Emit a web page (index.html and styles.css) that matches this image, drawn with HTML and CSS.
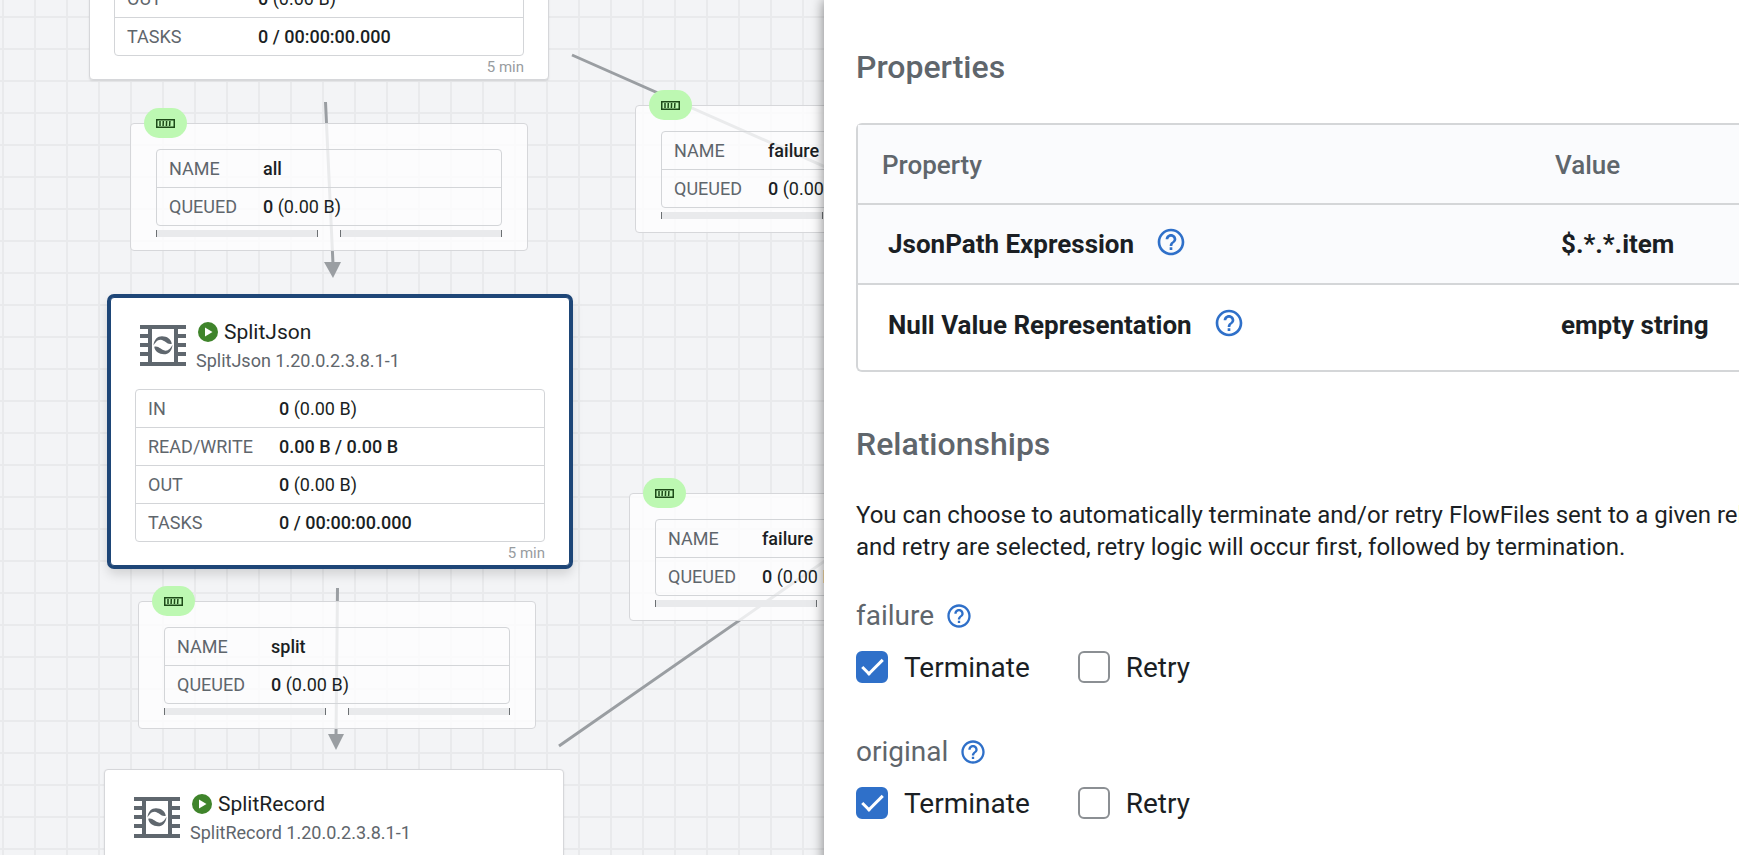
FILE: index.html
```html
<!DOCTYPE html>
<html lang="en">
<head>
<meta charset="utf-8">
<title>Flow Designer</title>
<link rel="stylesheet" href="styles.css">
</head>
<body>
<svg class="symbols" aria-hidden="true">
  <symbol id="help" viewBox="0 0 24 24"><path fill="currentColor" d="M11 18h2v-2h-2v2zm1-16C6.48 2 2 6.48 2 12s4.48 10 10 10 10-4.48 10-10S17.52 2 12 2zm0 18c-4.41 0-8-3.59-8-8s3.59-8 8-8 8 3.59 8 8-3.59 8-8 8zm0-14c-2.21 0-4 1.79-4 4h2c0-1.1.9-2 2-2s2 .9 2 2c0 2-3 1.75-3 5h2c0-2.250 3-2.500 3-5 0-2.210-1.790-4-4-4z"/></symbol>
  <symbol id="processor" viewBox="0 0 46 41">
    <path fill="currentColor" fill-rule="evenodd" d="M0 0H46V4H38V9H46V13H38V18H46V22H38V27H46V31H38V37H46V41H0V37H8V31H0V27H8V22H0V18H8V13H0V9H8V4H0ZM12 4V37H34V4Z"/>
    <path fill="currentColor" d="M13.500 20.500C14 14.500 17.500 11.300 22 11.300C27 11.300 31 14 31.800 18.800C27 20 25.500 15.500 20.500 14.800C17 15 15.500 17.500 13.500 20.500ZM32.500 20C32 26 28.500 29.300 24 29.300C19 29.300 15 26.500 14.200 21.800C19 20.600 20.500 25 25.500 25.800C29 25.500 30.500 23 32.500 20Z"/>
  </symbol>
  <symbol id="running" viewBox="0 0 20 20"><circle cx="10" cy="10" r="10" fill="#3f842b"/><path fill="#fff" d="M7 5.500L14.500 10L7 14.500Z"/></symbol>
  <symbol id="balance" viewBox="0 0 19 9"><path fill="none" stroke="#1d4a18" stroke-width="1.500" d="M.75.75H18.250V8.250H.75Z"/><path fill="none" stroke="#1d4a18" stroke-width="1.500" d="M4 2V7M7.300 2L7.100 7M10.600 2L10.400 7M13.900 2L13.600 7"/></symbol>
</svg>
<main class="designer">
  <section class="canvas" aria-label="Flow canvas">
    <svg class="links" aria-hidden="true">
      <path d="M325.500 102L333 264M337.500 588L336 736M572 55L1000 244M559 746L1000 439"/>
      <path class="arrow" d="M324 262H341L333 278ZM328 734H344L336 750Z"/>
    </svg>

    <article class="node node-source">
      <table class="stats">
        <tr><th scope="row">OUT</th><td><b>0</b> (0.00 B)</td></tr>
        <tr><th scope="row">TASKS</th><td><b>0 / 00:00:00.000</b></td></tr>
      </table>
      <p class="window">5 min</p>
    </article>

    <article class="node node-json selected">
      <header class="node-head">
        <svg class="type-icon"><use href="#processor"/></svg>
        <div>
          <h2><svg class="state"><use href="#running"/></svg>SplitJson</h2>
          <p class="version">SplitJson 1.20.0.2.3.8.1-1</p>
        </div>
      </header>
      <table class="stats">
        <tr><th scope="row">IN</th><td><b>0</b> (0.00 B)</td></tr>
        <tr><th scope="row">READ/WRITE</th><td><b>0.00 B / 0.00 B</b></td></tr>
        <tr><th scope="row">OUT</th><td><b>0</b> (0.00 B)</td></tr>
        <tr><th scope="row">TASKS</th><td><b>0 / 00:00:00.000</b></td></tr>
      </table>
      <p class="window">5 min</p>
    </article>

    <article class="node node-record">
      <header class="node-head">
        <svg class="type-icon"><use href="#processor"/></svg>
        <div>
          <h2><svg class="state"><use href="#running"/></svg>SplitRecord</h2>
          <p class="version">SplitRecord 1.20.0.2.3.8.1-1</p>
        </div>
      </header>
    </article>

    <article class="queue queue-all">
      <span class="badge"><svg><use href="#balance"/></svg></span>
      <table class="stats">
        <tr><th scope="row">NAME</th><td><b>all</b></td></tr>
        <tr><th scope="row">QUEUED</th><td><b>0</b> (0.00 B)</td></tr>
      </table>
      <div class="meters"><i></i><i></i></div>
    </article>

    <article class="queue queue-split">
      <span class="badge"><svg><use href="#balance"/></svg></span>
      <table class="stats">
        <tr><th scope="row">NAME</th><td><b>split</b></td></tr>
        <tr><th scope="row">QUEUED</th><td><b>0</b> (0.00 B)</td></tr>
      </table>
      <div class="meters"><i></i><i></i></div>
    </article>

    <article class="queue queue-failure-top">
      <span class="badge"><svg><use href="#balance"/></svg></span>
      <table class="stats">
        <tr><th scope="row">NAME</th><td><b>failure</b></td></tr>
        <tr><th scope="row">QUEUED</th><td><b>0</b> (0.00 B)</td></tr>
      </table>
      <div class="meters"><i></i><i></i></div>
    </article>

    <article class="queue queue-failure-low">
      <span class="badge"><svg><use href="#balance"/></svg></span>
      <table class="stats">
        <tr><th scope="row">NAME</th><td><b>failure</b></td></tr>
        <tr><th scope="row">QUEUED</th><td><b>0</b> (0.00 B)</td></tr>
      </table>
      <div class="meters"><i></i><i></i></div>
    </article>
  </section>

  <aside class="panel">
    <h1>Properties</h1>
    <table class="properties">
      <thead><tr><th scope="col">Property</th><th scope="col">Value</th></tr></thead>
      <tbody>
        <tr class="striped"><th scope="row"><span class="prop">JsonPath Expression<button type="button" class="help" aria-label="Help"><svg><use href="#help"/></svg></button></span></th><td>$.*.*.item</td></tr>
        <tr class="last"><th scope="row"><span class="prop">Null Value Representation<button type="button" class="help" aria-label="Help"><svg><use href="#help"/></svg></button></span></th><td>empty string</td></tr>
      </tbody>
    </table>

    <h1>Relationships</h1>
    <p class="hint">You can choose to automatically terminate and/or retry FlowFiles sent to a given rel<br>and retry are selected, retry logic will occur first, followed by termination.</p>

    <fieldset class="relation">
      <legend>failure<button type="button" class="help small" aria-label="Help"><svg><use href="#help"/></svg></button></legend>
      <div class="choices">
        <label><input type="checkbox" checked>Terminate</label>
        <label><input type="checkbox">Retry</label>
      </div>
    </fieldset>
    <fieldset class="relation">
      <legend>original<button type="button" class="help small" aria-label="Help"><svg><use href="#help"/></svg></button></legend>
      <div class="choices">
        <label><input type="checkbox" checked>Terminate</label>
        <label><input type="checkbox">Retry</label>
      </div>
    </fieldset>
  </aside>
</main>
</body>
</html>
```
FILE: styles.css
```css
*, *::after { box-sizing: border-box; }

body {
  margin: 0;
  font-family: Roboto, "Liberation Sans", sans-serif;
  color: #1b1f24;
}

h1, h2, p { margin: 0; }

.symbols { position: absolute; width: 0; height: 0; }

.designer {
  display: grid;
  grid-template-columns: minmax(0, 824fr) minmax(0, 915fr);
  height: 100vh;
  overflow: hidden;
}

/* Flow canvas */
.canvas {
  position: relative;
  overflow: hidden;
  background-color: #f3f4f6;
  background-image:
    linear-gradient(#e9eaec 2px, transparent 2px),
    linear-gradient(90deg, #e9eaec 2px, transparent 2px);
  background-size: 32px 32px;
  background-position: 2px 16px;
}

.links { position: absolute; inset: 0; width: 100%; height: 100%; }
.links path { fill: none; stroke: #9a9ea2; stroke-width: 3; }
.links .arrow { fill: #9a9ea2; stroke: none; }

.node, .queue {
  position: absolute;
  border: 1px solid #d6d7da;
  border-radius: 4px;
}

.node {
  width: 460px;
  padding: 0 24px;
  background: #fff;
  box-shadow: 0 1px 2px #0000001a;
}

.node.selected {
  box-shadow: 0 0 0 3px #1e4677, 0 6px 12px 2px #00000026;
  border-color: #1e4677;
}

.node-source { left: 89px; top: -22px; }
.node-json { left: 110px; top: 297px; }
.node-record { left: 104px; top: 769px; height: 268px; }

.node-head {
  display: flex;
  gap: 10px;
  height: 91px;
  padding: 20px 5px 0;
}

.type-icon { width: 46px; height: 41px; margin-top: 7px; color: #5f676e; }
.state { width: 20px; height: 20px; }

.node h2 {
  display: flex;
  align-items: center;
  gap: 6px;
  padding-left: 2px;
  font-size: 21px;
  font-weight: 400;
  line-height: 28px;
}

.version { font-size: 18px; line-height: 30px; color: #5f666c; }

.stats {
  width: 100%;
  border: 1px solid #d3d5d8;
  border-radius: 4px;
  border-spacing: 0;
  font-size: 18px;
  line-height: 37px;
}

.stats th, .stats td { padding: 0; text-align: left; font-weight: 400; }
.stats th { width: 143px; padding-left: 12px; color: #5f666c; }
.stats b { font-weight: 500; }
.stats tr + tr > * { border-top: 1px solid #d3d5d8; }

.window {
  font-size: 15px;
  line-height: 23px;
  text-align: right;
  color: #989c9f;
}

.queue {
  width: 398px;
  padding: 25px 25px 13px;
  background: #fefeffcc;
}

.queue .stats th { width: 106px; }

.queue-all { left: 130px; top: 123px; }
.queue-split { left: 138px; top: 601px; }
.queue-failure-top { left: 635px; top: 105px; }
.queue-failure-low { left: 629px; top: 493px; }

.badge {
  position: absolute;
  left: 13px;
  top: -16px;
  display: flex;
  align-items: center;
  justify-content: center;
  width: 43px;
  height: 30px;
  border-radius: 15px;
  background: #bdf8b2;
}

.badge svg { width: 19px; height: 9px; }

.meters { display: flex; gap: 22px; padding-top: 4px; }
.meters i {
  flex: 1;
  height: 7px;
  border: solid #6c7073;
  border-width: 0 1px;
  background: #e9eaec;
}

/* Details panel */
.panel {
  position: relative;
  padding: 46px 0 0 32px;
  background: #fff;
  box-shadow: 0 0 12px #00000080;
}

.panel h1 {
  font-size: 32px;
  font-weight: 500;
  line-height: 42px;
  color: #5f666c;
}

.properties {
  width: 100%;
  margin: 35px 0 51px;
  border: 2px solid #d4d6d8;
  border-right: 0;
  border-radius: 6px 0 0 6px;
  border-spacing: 0;
  font-size: 26px;
  line-height: 32px;
}

.properties th, .properties td { text-align: left; font-weight: 700; }
.properties thead th {
  height: 78px;
  padding: 2px 24px 0;
  font-weight: 500;
  color: #5f666c;
  background: #fafbfd;
}
.properties thead th:first-child { width: 673px; }
.properties tbody th, .properties tbody td {
  height: 80px;
  padding: 0 0 0 30px;
  border-top: 2px solid #d4d6d8;
}
.properties .striped > * { background: #fafbfd; }
.properties .last > * { height: 87px; padding-bottom: 6px; }

.prop { display: flex; align-items: center; gap: 21px; }

.help {
  display: flex;
  padding: 0;
  border: 0;
  background: none;
  color: #2f70c9;
}
.help svg { width: 32px; height: 32px; }
.help.small svg { width: 28px; height: 28px; }
.prop .help { margin: -4px 0 0; }

.hint {
  padding: 34px 0 35px;
  font-size: 24px;
  line-height: 32px;
  white-space: nowrap;
}

.relation { margin: 0 0 49px; padding: 0; border: 0; }
.relation legend {
  display: flex;
  align-items: center;
  gap: 11px;
  padding: 0;
  font-size: 28px;
  line-height: 36px;
  color: #5f666c;
}

.choices { display: flex; gap: 48px; padding-top: 15px; }
.choices label {
  display: flex;
  align-items: center;
  gap: 16px;
  height: 36px;
  font-size: 28px;
}

.choices input {
  appearance: none;
  width: 32px;
  height: 32px;
  margin: 0;
  border: 2px solid #8b8f93;
  border-radius: 6px;
  background: #fff;
}
.choices input:checked {
  position: relative;
  border-color: #2f70c9;
  background: #2f70c9;
}
.choices input:checked::after {
  content: "";
  position: absolute;
  left: 9px;
  top: 1px;
  width: 11px;
  height: 21px;
  border: solid #fff;
  border-width: 0 3px 3px 0;
  transform: rotate(45deg);
}
```
